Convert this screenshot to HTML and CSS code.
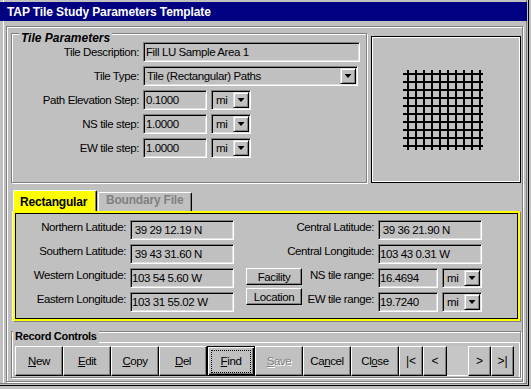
FILE: index.html
```html
<!DOCTYPE html>
<html lang="en">
  <head>
    <meta charset="UTF-8" />
    <title>TAP Tile Study Parameters Template</title>
    <link rel="stylesheet" href="styles.css">
  </head>
  <body>
    <div class="window">
      <div class="titlebar">TAP Tile Study Parameters Template</div>
      <div class="main">
        <div class="top">
          <div class="group params">
            <span class="legend">Tile Parameters</span>
            <span class="lbl">Tile Description:</span>
            <div class="field desc">Fill LU Sample Area 1</div>
            <span class="lbl">Tile Type:</span>
            <div class="combo type">
              <span class="value">Tile (Rectangular) Paths</span>
              <span class="drop"><i class="arrow"></i></span>
            </div>
            <span class="lbl">Path Elevation Step:</span>
            <div class="pair">
              <div class="field step">0.1000</div>
              <div class="combo unit">
                <span class="value">mi</span>
                <span class="drop"><i class="arrow"></i></span>
              </div>
            </div>
            <span class="lbl">NS tile step:</span>
            <div class="pair">
              <div class="field step">1.0000</div>
              <div class="combo unit">
                <span class="value">mi</span>
                <span class="drop"><i class="arrow"></i></span>
              </div>
            </div>
            <span class="lbl">EW tile step:</span>
            <div class="pair">
              <div class="field step">1.0000</div>
              <div class="combo unit">
                <span class="value">mi</span>
                <span class="drop"><i class="arrow"></i></span>
              </div>
            </div>
          </div>
          <div class="preview">
            <svg width="80" height="80" viewBox="0 0 80 80">
              <path
                d="M0 4H80M0 12H80M0 20H80M0 28H80M0 36H80M0 44H80M0 52H80M0 60H80M0 68H80M0 76H80
                   M5 0V80M13 0V80M21 0V80M29 0V80M37 0V80M45 0V80M53 0V80M61 0V80M69 0V80M77 0V80"
                stroke="#000"
                stroke-width="2"
                fill="none"
                shape-rendering="crispEdges"
              />
            </svg>
          </div>
        </div>

        <div class="tabs">
          <div class="tab active">Rectangular</div>
          <div class="tab">Boundary File</div>
        </div>
        <div class="tabpanel">
          <div class="coords">
            <span class="lbl">Northern Latitude:</span>
            <div class="field coord">&nbsp;39 29 12.19 N</div>
            <span class="lbl wide">Central Latitude:</span>
            <div class="field coord">&nbsp;39 36 21.90 N</div>

            <span class="lbl">Southern Latitude:</span>
            <div class="field coord">&nbsp;39 43 31.60 N</div>
            <span class="lbl wide">Central Longitude:</span>
            <div class="field coord">103 43 0.31 W</div>

            <span class="lbl">Western Longitude:</span>
            <div class="field coord">103 54 5.60 W</div>
            <button class="btn small">Facility</button>
            <span class="lbl">NS tile range:</span>
            <div class="pair">
              <div class="field range">16.4694</div>
              <div class="combo unit">
                <span class="value">mi</span>
                <span class="drop"><i class="arrow"></i></span>
              </div>
            </div>

            <span class="lbl">Eastern Longitude:</span>
            <div class="field coord">103 31 55.02 W</div>
            <button class="btn small lift">Location</button>
            <span class="lbl">EW tile range:</span>
            <div class="pair">
              <div class="field range">19.7240</div>
              <div class="combo unit">
                <span class="value">mi</span>
                <span class="drop"><i class="arrow"></i></span>
              </div>
            </div>
          </div>
        </div>

        <div class="group record">
          <span class="legend">Record Controls</span>
          <div class="toolbar">
            <button class="btn"><span><u>N</u>ew</span></button>
            <button class="btn"><span><u>E</u>dit</span></button>
            <button class="btn"><span><u>C</u>opy</span></button>
            <button class="btn"><span><u>D</u>el</span></button>
            <button class="btn default"><span class="focus"><u>F</u>ind</span></button>
            <button class="btn disabled"><span><u>S</u>ave</span></button>
            <button class="btn"><span>Ca<u>n</u>cel</span></button>
            <button class="btn"><span>Cl<u>o</u>se</span></button>
            <button class="btn nav">|&lt;</button>
            <button class="btn nav">&lt;</button>
            <div class="slot"></div>
            <button class="btn nav narrow">&gt;</button>
            <button class="btn nav narrow">&gt;|</button>
          </div>
        </div>
      </div>
    </div>
  </body>
</html>
```

FILE: styles.css
```css
body {
  margin: 0;
  background-color: #c0c0c0;
  font-family: "Liberation Sans", Arial, sans-serif;
  font-size: 11.5px;
  letter-spacing: -0.4px;
  color: #000;
}

/* Window frame */
.window {
  box-sizing: border-box;
  width: 529px;
  height: 386px;
  padding-top: 2px;
  border-right: 1px solid #000;
  border-bottom: 1px solid #000;
  box-shadow: inset -1px -1px 0 #c0c0c0, inset -2px -2px 0 #808080,
    inset 3px 0 0 #c0c0c0, inset 4px 0 0 #fff;
  display: flex;
  flex-direction: column;
}
.titlebar {
  height: 19px;
  margin-right: 1px;
  padding-left: 7px;
  background-color: #000080;
  color: #fff;
  font-size: 12px;
  font-weight: bold;
  letter-spacing: -0.1px;
  display: flex;
  align-items: center;
}
.main {
  box-sizing: border-box;
  width: 517px;
  height: 356px;
  margin: 5px 0 0 6px;
  padding: 6px 1px 0 4px;
  border: 1px solid #808080;
  box-shadow: inset 1px 1px 0 #fff, 1px 1px 0 #fff;
}

/* Etched group boxes */
.group {
  position: relative;
  box-sizing: border-box;
  border: 1px solid #808080;
  box-shadow: inset 1px 1px 0 #fff, 1px 1px 0 #fff;
}
.legend {
  position: absolute;
  top: -3px;
  padding: 0 2px;
  background-color: #c0c0c0;
  font-size: 11px;
  font-weight: bold;
  line-height: 14px;
  white-space: nowrap;
}

.top {
  display: flex;
  gap: 4px;
}
.params {
  width: 356px;
  height: 150px;
  padding-top: 8px;
  display: grid;
  grid-template-columns: 127px auto;
  grid-auto-rows: 20px;
  column-gap: 4px;
  row-gap: 4px;
  align-content: start;
}
.params .legend {
  left: 7px;
  font-size: 12px;
  font-style: italic;
  letter-spacing: 0;
}
.params .lbl {
  line-height: 20px;
}
.lbl {
  text-align: right;
  white-space: nowrap;
}

/* Sunken fields */
.field,
.combo {
  box-sizing: border-box;
  height: 20px;
  border: 1px solid;
  border-color: #808080 #fff #fff #808080;
  box-shadow: inset 1px 1px 0 #000, inset -1px -1px 0 #dfdfdf;
  line-height: 16px;
  white-space: nowrap;
  overflow: hidden;
}
.field {
  padding: 1px 2px;
}
.combo {
  padding: 1px;
  display: flex;
}
.combo .value {
  flex: 1;
  padding-left: 2px;
}
.unit .value {
  padding-left: 3px;
}
.drop {
  box-sizing: border-box;
  width: 16px;
  height: 16px;
  border: 1px solid;
  border-color: #dfdfdf #000 #000 #dfdfdf;
  box-shadow: inset 1px 1px 0 #fff, inset -1px -1px 0 #808080;
  display: flex;
  align-items: center;
  justify-content: center;
}
.arrow {
  width: 7px;
  height: 4px;
  background-color: #000;
  clip-path: polygon(0 0, 100% 0, 50% 100%);
}
.desc {
  width: 217px;
}
.type {
  width: 215px;
}
.pair {
  display: flex;
  gap: 4px;
}
.step {
  width: 64px;
}
.unit {
  width: 40px;
}

.preview {
  box-sizing: border-box;
  width: 150px;
  height: 147px;
  margin-top: 3px;
  padding: 33px 0 0 31px;
  border: 1px solid #000;
  box-shadow: inset 0 0 0 1px #fff;
}
.preview svg {
  display: block;
}

/* Tabs */
.tabs {
  height: 21px;
  margin: 7px 0 0 2px;
  display: flex;
  align-items: flex-end;
}
.tab {
  box-sizing: border-box;
  width: 94px;
  height: 19px;
  margin-left: 1px;
  padding-left: 7px;
  border-top: 1px solid #fff;
  border-left: 1px solid #fff;
  border-right: 1px solid #000;
  border-radius: 2px 2px 0 0;
  box-shadow: inset -1px 0 0 #808080;
  color: #808080;
  font-size: 12px;
  font-weight: bold;
  letter-spacing: -0.2px;
  line-height: 14px;
}
.tab.active {
  width: 84px;
  height: 21px;
  margin-left: 0;
  padding: 4px 0 0 6px;
  background-color: #ffff00;
  color: #000;
}
.tabpanel {
  box-sizing: border-box;
  width: 507px;
  height: 110px;
  margin-left: 2px;
  padding-top: 7px;
  border: 2px solid #ffff00;
  box-shadow: inset 0 0 0 1px #000, 1px 1px 0 #808080, -1px 0 0 #fff;
}
.coords {
  display: grid;
  grid-template-columns: 111px 104px 64px 68px 104px;
  grid-auto-rows: 20px;
  column-gap: 4px;
  row-gap: 4px;
}
.coords .lbl {
  line-height: 14px;
}
.coords .wide {
  grid-column: span 2;
}
.coord {
  padding-left: 1px;
}
.range {
  width: 60px;
  padding-left: 1px;
}

/* Buttons */
.btn {
  box-sizing: border-box;
  width: 48px;
  height: 30px;
  padding: 0;
  background-color: #c0c0c0;
  border: 1px solid;
  border-color: #fff #000 #000 #fff;
  box-shadow: inset -1px -1px 0 #808080;
  font: inherit;
  letter-spacing: inherit;
  color: #000;
  display: flex;
  align-items: center;
  justify-content: center;
}
.btn.small {
  width: 56px;
  height: 17px;
  justify-self: end;
}
.btn.lift {
  margin-top: -4px;
}
.btn.default {
  border-color: #000;
  box-shadow: inset 1px 1px 0 #fff, inset -1px -1px 0 #000,
    inset -2px -2px 0 #808080;
}
.focus {
  box-sizing: border-box;
  width: 40px;
  height: 23px;
  border: 1px dotted #000;
  display: flex;
  align-items: center;
  justify-content: center;
}
.btn.disabled {
  color: #808080;
  text-shadow: 1px 1px 0 #fff;
}
.btn.nav {
  width: 24px;
  font-size: 12px;
  letter-spacing: 0;
}
.btn.nav.narrow {
  width: 23px;
}
.slot {
  box-sizing: border-box;
  width: 21px;
  height: 30px;
  background-color: #c6c6c6;
  border-bottom: 1px solid #fff;
}

/* Record controls */
.record {
  width: 510px;
  height: 47px;
  margin-top: 10px;
}
.record .legend {
  left: 1px;
  letter-spacing: -0.3px;
}
.toolbar {
  margin-top: 10px;
  padding: 3px 0 1px 3px;
  border-top: 1px solid #fff;
  border-right: 1px solid #fff;
  display: flex;
}
```
